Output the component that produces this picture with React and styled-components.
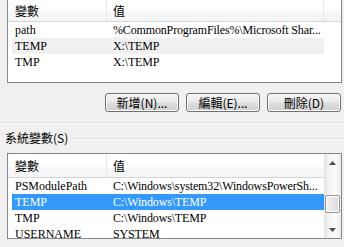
import React from "react";
import styled, { createGlobalStyle } from "styled-components";

const GlobalStyle = createGlobalStyle`
  html, body {
    margin: 0;
    padding: 0;
    background: #f0f0f0;
  }
  body {
    font-family: "Liberation Serif", "Noto Sans CJK TC", serif;
    font-size: 12px;
    color: #000;
  }
`;

//page
const Page = styled.div`
  width: 344px;
  height: 247px;
  overflow: hidden;
  background: #f0f0f0;
  display: flex;
  flex-direction: column;
`;

//LIST CSS
const ListBox = styled.div`
  box-sizing: border-box;
  margin: ${(p) => p.$top}px 2px 0 7px;
  height: ${(p) => p.$height}px;
  border: 1px solid #828790;
  background: #fff;
  display: flex;
  overflow: hidden;
`;

const ListBody = styled.div`
  flex: 1;
  display: flex;
  flex-direction: column;
  min-width: 0;
`;

const HeaderRow = styled.div`
  height: ${(p) => p.$height}px;
  display: flex;
  flex-shrink: 0;
  border-bottom: 1px solid #d5d5d5;
  background: linear-gradient(#ffffff 0%, #ffffff 55%, #f7f8fa 56%, #f3f4f6 100%);
`;

const HeaderCell = styled.div`
  box-sizing: border-box;
  width: ${(p) => p.$width}px;
  flex: ${(p) => (p.$fill ? 1 : "none")};
  padding-left: ${(p) => p.$pad}px;
  display: flex;
  align-items: center;
  border-right: ${(p) => (p.$fill ? "none" : "1px solid #e3e8ee")};
  font-family: "Noto Sans CJK TC", sans-serif;
  font-size: 12px;
`;

const Rows = styled.div`
  display: flex;
  flex-direction: column;
  padding-left: 4px;
`;

const Row = styled.div`
  flex-shrink: 0;
  height: 16px;
  display: flex;
  align-items: center;
  width: 312px;
  background: ${(p) => (p.$selected ? "#3399ff" : p.$dim ? "#f0f0f0" : "transparent")};
  color: ${(p) => (p.$selected ? "#fff" : "#000")};
  white-space: nowrap;
`;

const Cell = styled.div`
  box-sizing: border-box;
  width: ${(p) => p.$width}px;
  flex: ${(p) => (p.$fill ? 1 : "none")};
  padding-left: ${(p) => p.$pad}px;
  white-space: nowrap;
  letter-spacing: ${(p) => (p.$fill ? "-0.15px" : "0")};
`;

//SCROLLBAR CSS
const ScrollBar = styled.div`
  width: 17px;
  flex-shrink: 0;
  display: flex;
  flex-direction: column;
  background: linear-gradient(90deg, #e3e3e3 0%, #f4f4f4 30%, #f9f9f9 70%, #ededed 100%);
`;

const ArrowBox = styled.div`
  height: 17px;
  display: flex;
  align-items: center;
  justify-content: center;
`;

const Track = styled.div`
  flex: 1;
  display: flex;
  flex-direction: column;
  padding-top: ${(p) => p.$offset}px;
`;

const Thumb = styled.div`
  box-sizing: border-box;
  margin: 0 1px;
  height: 18px;
  border: 1px solid #979797;
  border-radius: 2px;
  background: linear-gradient(90deg, #f4f4f4 0%, #e9e9e9 50%, #d8d8d8 100%);
  box-shadow: inset 0 0 0 1px #fcfcfc;
`;

//BUTTON CSS
const ButtonRow = styled.div`
  display: flex;
  justify-content: flex-end;
  gap: 7px;
  margin-top: 10px;
  padding-right: 3px;
`;

const Button = styled.button`
  box-sizing: border-box;
  width: 74px;
  height: 19px;
  margin: 0;
  padding: 0;
  border: 1px solid #707070;
  border-radius: 3px;
  background: linear-gradient(#f2f2f2 0%, #ebebeb 48%, #dddddd 52%, #cfcfcf 100%);
  box-shadow: inset 0 0 0 1px #fcfcfc;
  font-family: "Noto Sans CJK TC", sans-serif;
  font-size: 12px;
  color: #000;
  display: flex;
  align-items: center;
  justify-content: center;
  line-height: 1;
`;

//GROUP CSS
const Separator = styled.div`
  margin-top: 10px;
  height: 1px;
  background: #d5dfe5;
  border-bottom: 1px solid #ffffff;
`;

const GroupHead = styled.div`
  margin-top: 5px;
  height: 16px;
  display: flex;
  align-items: center;
  gap: 3px;
  padding-left: 5px;
`;

const GroupLabel = styled.span`
  font-family: "Noto Sans CJK TC", sans-serif;
  font-size: 12px;
  white-space: nowrap;
`;

const GroupLine = styled.div`
  flex: 1;
  height: 1px;
  margin-top: 4px;
  background: #d5dfe5;
  border-bottom: 1px solid #fff;
`;

const Arrow = ({ down }) => (
  <svg width="7" height="4" viewBox="0 0 7 4">
    <path d={down ? "M0 0 H7 L3.5 4 Z" : "M0 4 H7 L3.5 0 Z"} fill="#4d4d4d" />
  </svg>
);

const userVars = [
  { name: "path", value: "%CommonProgramFiles%\\Microsoft Shar..." },
  { name: "TEMP", value: "X:\\TEMP", dim: true },
  { name: "TMP", value: "X:\\TEMP" },
];

const systemVars = [
  { name: "PSModulePath", value: "C:\\Windows\\system32\\WindowsPowerSh..." },
  { name: "TEMP", value: "C:\\Windows\\TEMP", selected: true },
  { name: "TMP", value: "C:\\Windows\\TEMP" },
  { name: "USERNAME", value: "SYSTEM" },
];

function VarRows({ items }) {
  return (
    <Rows>
      {items.map((v) => (
        <Row key={v.name} $selected={v.selected} $dim={v.dim}>
          <Cell $width={95} $pad={3}>{v.name}</Cell>
          <Cell $fill $pad={6}>{v.value}</Cell>
        </Row>
      ))}
    </Rows>
  );
}

export default function App() {
  return (
    <Page>
      <GlobalStyle />
      <ListBox $top={-2} $height={85}>
        <ListBody>
          <HeaderRow $height={22}>
            <HeaderCell $width={99} $pad={7}>變數</HeaderCell>
            <HeaderCell $width={217} $pad={6}>值</HeaderCell>
            <HeaderCell $fill />
          </HeaderRow>
          <VarRows items={userVars} />
        </ListBody>
      </ListBox>

      <ButtonRow>
        <Button>新增(N)...</Button>
        <Button>編輯(E)...</Button>
        <Button>刪除(D)</Button>
      </ButtonRow>

      <Separator />

      <GroupHead>
        <GroupLabel>系統變數(S)</GroupLabel>
        <GroupLine />
      </GroupHead>

      <ListBox $top={8} $height={86}>
        <ListBody>
          <HeaderRow $height={23}>
            <HeaderCell $width={99} $pad={7}>變數</HeaderCell>
            <HeaderCell $fill $pad={6}>值</HeaderCell>
          </HeaderRow>
          <VarRows items={systemVars} />
        </ListBody>
        <ScrollBar>
          <ArrowBox>
            <Arrow />
          </ArrowBox>
          <Track $offset={24}>
            <Thumb />
          </Track>
          <ArrowBox>
            <Arrow down />
          </ArrowBox>
        </ScrollBar>
      </ListBox>
    </Page>
  );
}
